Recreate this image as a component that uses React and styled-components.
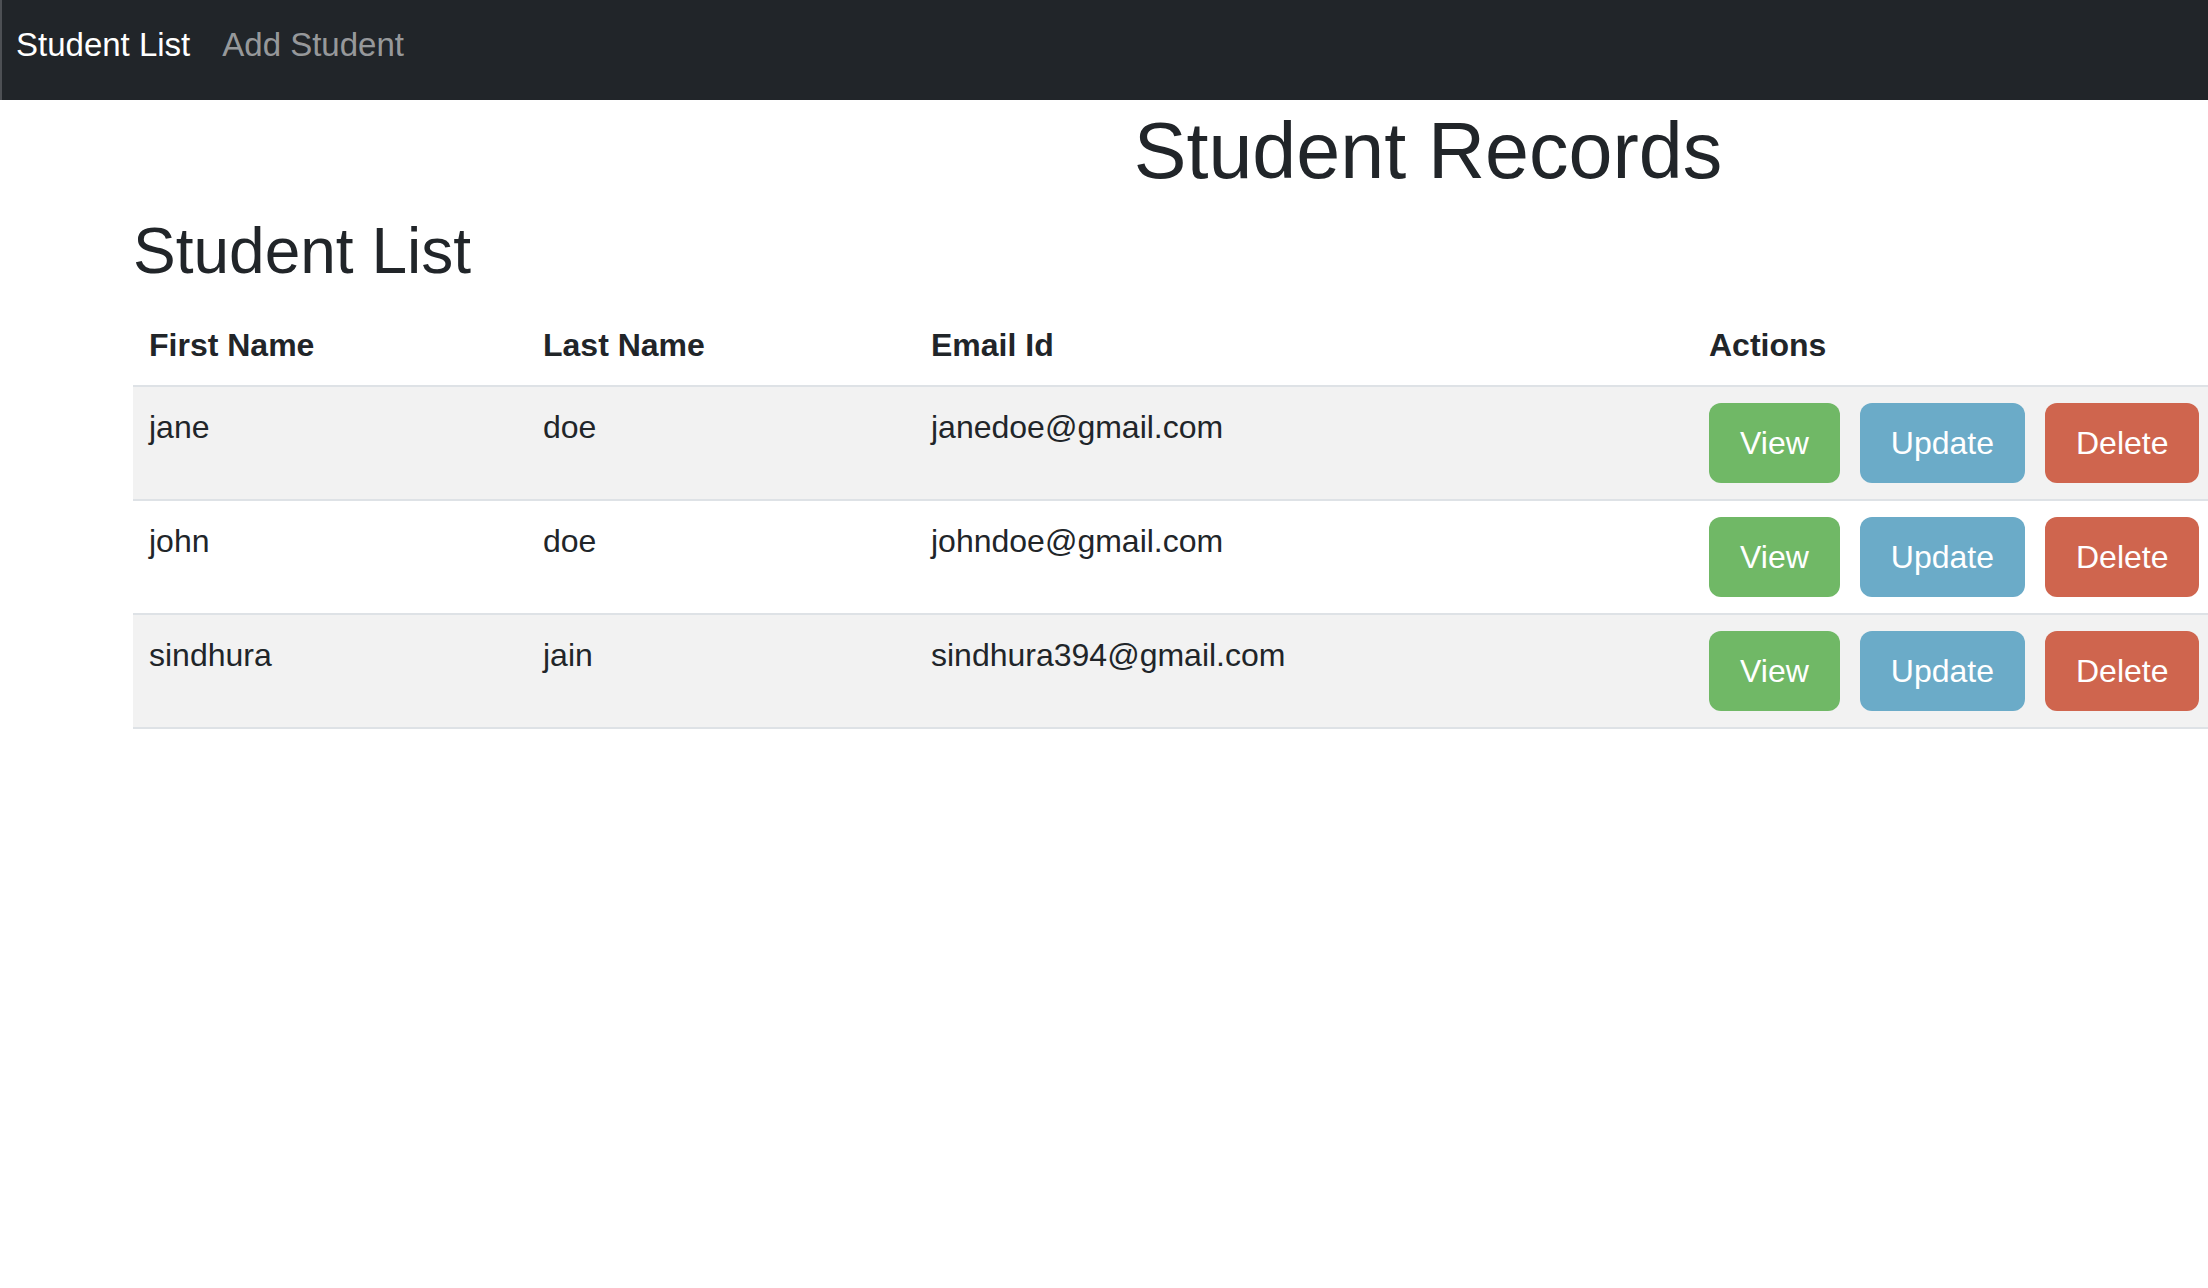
import React from 'react';
import styled, { createGlobalStyle } from 'styled-components';

const GlobalStyle = createGlobalStyle`
    html, body {
        margin: 0;
        padding: 0;
        background: #fff;
        overflow-x: hidden;
    }
    body {
        font-family: "Liberation Sans", Arial, sans-serif;
        color: #212529;
    }
    * {
        box-sizing: border-box;
    }
`

const Page = styled.div`
    min-height: 100vh;
    overflow: hidden;
`

const NavBar = styled.nav`
    display: flex;
    align-items: flex-start;
    gap: 32px;
    height: 100px;
    padding: 20px 0 0 14px;
    background: #212529;
    border-left: 2px solid #4d5054;
`

const NavItem = styled.a`
    font-size: 33px;
    line-height: 1.5;
    text-decoration: none;
    color: ${props => props.$active ? '#fff' : 'rgba(255,255,255,.55)'};
    cursor: pointer;
`

const Container = styled.main`
    width: 2590px;
    margin-left: 133px;
`

const Title = styled.h1`
    margin: 4px 0 14px;
    font-size: 79px;
    font-weight: 400;
    line-height: 1.2;
    text-align: center;
`

const SectionTitle = styled.h2`
    margin: 0 0 15px;
    font-size: 64px;
    font-weight: 400;
    line-height: 1.2;
`

const Table = styled.table`
    width: 100%;
    border-collapse: collapse;
    table-layout: fixed;
    font-size: 32px;
    line-height: 48px;
    tbody tr:nth-child(odd){
        background: #f2f2f2;
    }
`

const Th = styled.th`
    width: ${props => props.$width ? props.$width + 'px' : 'auto'};
    padding: 16px;
    text-align: left;
    font-weight: 700;
    border-bottom: 2px solid #dee2e6;
`

const Td = styled.td`
    padding: 16px;
    vertical-align: top;
    border-bottom: 2px solid #dee2e6;
`

const ButtonGroup = styled.div`
    display: flex;
    gap: 20px;
`

const colors = {
    view: '#70b866',
    update: '#6babc8',
    delete: '#cf654e'
}

const ActionButton = styled.button`
    padding: 16px 31px;
    border: none;
    border-radius: 12px;
    font-family: inherit;
    font-size: 32px;
    line-height: 48px;
    color: #fff;
    background: ${props => colors[props.$kind]};
    cursor: pointer;
`

const students = [
    { id: 1, firstName: 'jane', lastName: 'doe', email: 'janedoe@gmail.com' },
    { id: 2, firstName: 'john', lastName: 'doe', email: 'johndoe@gmail.com' },
    { id: 3, firstName: 'sindhura', lastName: 'jain', email: 'sindhura394@gmail.com' }
]

const App = () => {
    return (
        <Page>
            <GlobalStyle />
            <NavBar>
                <NavItem $active>Student List</NavItem>
                <NavItem>Add Student</NavItem>
            </NavBar>
            <Container>
                <Title>Student Records</Title>
                <SectionTitle>Student List</SectionTitle>
                <Table>
                    <thead>
                        <tr>
                            <Th $width={394}>First Name</Th>
                            <Th $width={388}>Last Name</Th>
                            <Th $width={778}>Email Id</Th>
                            <Th>Actions</Th>
                        </tr>
                    </thead>
                    <tbody>
                        {students.map(s => (
                            <tr key={s.id}>
                                <Td>{s.firstName}</Td>
                                <Td>{s.lastName}</Td>
                                <Td>{s.email}</Td>
                                <Td>
                                    <ButtonGroup>
                                        <ActionButton $kind="view">View</ActionButton>
                                        <ActionButton $kind="update">Update</ActionButton>
                                        <ActionButton $kind="delete">Delete</ActionButton>
                                    </ButtonGroup>
                                </Td>
                            </tr>
                        ))}
                    </tbody>
                </Table>
            </Container>
        </Page>
    )
}

export default App
